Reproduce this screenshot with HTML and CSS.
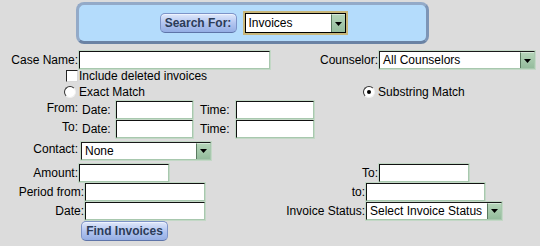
FILE: index.html
```html
<!DOCTYPE html>
<html lang="en">
<head>
<meta charset="UTF-8" />
<title>Invoice Search</title>
<link rel="stylesheet" href="styles.css">
</head>
<body>

<div class="searchbar">
  <button class="btn btn-search">Search For:</button>
  <div class="select sel-type focused">
    <span class="sel-text">Invoices</span>
    <span class="arrow"><svg width="7" height="4" viewBox="0 0 7 4"><path d="M0 0h7L3.5 4z" fill="#000"/></svg></span>
  </div>
</div>

<form class="form">
  <div class="row r1">
    <label class="lbl w78">Case Name:</label>
    <input type="text" class="field w191">
    <label class="lbl w108">Counselor:</label>
    <div class="select w156">
      <span class="sel-text">All Counselors</span>
      <span class="arrow"><svg width="7" height="4" viewBox="0 0 7 4"><path d="M0 0h7L3.5 4z" fill="#000"/></svg></span>
    </div>
  </div>

  <div class="row r2">
    <input type="checkbox" class="check">
    <span class="opt">Include deleted invoices</span>
  </div>

  <div class="row r3">
    <input type="radio" name="match" class="radio radio-exact">
    <span class="opt">Exact Match</span>
    <input type="radio" name="match" class="radio radio-sub" checked>
    <span class="opt">Substring Match</span>
  </div>

  <div class="row r4">
    <label class="lbl w78 raised">From:</label>
    <span class="sub sub-date">Date:</span>
    <input type="text" class="field w77">
    <span class="sub sub-time">Time:</span>
    <input type="text" class="field w78">
  </div>

  <div class="row r5">
    <label class="lbl w78 raised">To:</label>
    <span class="sub sub-date">Date:</span>
    <input type="text" class="field w77">
    <span class="sub sub-time">Time:</span>
    <input type="text" class="field w78">
  </div>

  <div class="row r6">
    <label class="lbl w78 raised">Contact:</label>
    <div class="select w130 gap2">
      <span class="sel-text">None</span>
      <span class="arrow"><svg width="7" height="4" viewBox="0 0 7 4"><path d="M0 0h7L3.5 4z" fill="#000"/></svg></span>
    </div>
  </div>

  <div class="row r7">
    <label class="lbl w78">Amount:</label>
    <input type="text" class="field w90">
    <label class="lbl w209">To:</label>
    <input type="text" class="field w90">
  </div>

  <div class="row r8">
    <label class="lbl w84">Period from:</label>
    <input type="text" class="field w120">
    <label class="lbl w160">to:</label>
    <input type="text" class="field w119">
  </div>

  <div class="row r9">
    <label class="lbl w84">Date:</label>
    <input type="text" class="field w120">
    <label class="lbl w160">Invoice Status:</label>
    <div class="select w136">
      <span class="sel-text">Select Invoice Status</span>
      <span class="arrow"><svg width="7" height="4" viewBox="0 0 7 4"><path d="M0 0h7L3.5 4z" fill="#000"/></svg></span>
    </div>
  </div>

  <div class="row r10">
    <button type="button" class="btn btn-find">Find Invoices</button>
  </div>
</form>

</body>
</html>
```

FILE: styles.css
```css
html, body {
  margin: 0;
  padding: 0;
  background: #dcdcdc;
  font-family: "Liberation Sans", Arial, sans-serif;
  font-size: 12px;
  color: #000;
}

.searchbar {
  box-sizing: border-box;
  margin: 2px 0 0 76px;
  width: 353px;
  height: 42px;
  background: #b4dcfc;
  border: 3px solid #93aac8;
  border-bottom-color: #6a82a4;
  border-right-color: #7d95b6;
  border-radius: 8px;
  display: flex;
  align-items: center;
  justify-content: center;
  gap: 8px;
}

.btn {
  box-sizing: border-box;
  height: 20px;
  padding: 0;
  white-space: nowrap;
  font-family: "Liberation Sans", Arial, sans-serif;
  font-size: 12px;
  font-weight: bold;
  color: #2c3c58;
  background: linear-gradient(#dfe8fb, #b3c5f0 50%, #94aee4);
  border: 1px solid #7d93c8;
  border-bottom-color: #5e74a8;
  border-radius: 5px;
  box-shadow: inset 0 1px 0 #eef3fe;
}

.btn-search { width: 77px; }
.btn-find { width: 87px; margin-left: 81px; }

.select {
  box-sizing: border-box;
  height: 18px;
  display: flex;
  align-items: stretch;
  background: #fff;
  border: 1px solid #a8c8ae;
  border-top-color: #1a1a1a;
  border-left-color: #1a1a1a;
  box-shadow: 0 0 0 1px #c3d8c6;
}

.sel-text {
  flex: 1;
  padding-left: 3px;
  line-height: 16px;
  white-space: nowrap;
  overflow: hidden;
}

.arrow {
  width: 14px;
  flex: none;
  display: flex;
  align-items: center;
  justify-content: center;
  background: linear-gradient(#b4d4b8, #94bc9c);
  border-left: 1px solid #5a7a60;
  border-top: 1px solid #d6e8d8;
  box-sizing: border-box;
}

.sel-type {
  width: 101px;
  height: 20px;
  border: 1px solid #000;
  box-shadow: 0 0 0 2px #c8b679;
}
.sel-type .sel-text { line-height: 18px; }

.row {
  display: flex;
  align-items: center;
  white-space: nowrap;
}

.r1 { margin-top: 7px; height: 18px; }
.r2 { height: 14px; padding-left: 66px; }
.r3 { height: 17px; padding-left: 64px; }
.r4 { height: 19px; }
.r5 { height: 19px; }
.r6 { height: 19px; margin-top: 3px; }
.r7 { height: 19px; margin-top: 3px; }
.r8 { height: 19px; }
.r9 { height: 19px; }
.r10 { height: 22px; }

.lbl {
  display: block;
  text-align: right;
  flex: none;
}
.raised { align-self: flex-start; padding-top: 1px; }

.w78 { width: 78px; }
.w84 { width: 84px; }
.w108 { width: 108px; }
.w160 { width: 160px; }
.w209 { width: 209px; }

.field {
  box-sizing: border-box;
  height: 18px;
  margin: 0 0 0 1px;
  padding: 0 2px;
  font: inherit;
  background: #fff;
  border: 1px solid #a8c8ae;
  border-top-color: #111;
  border-left-color: #111;
  box-shadow: 0 0 0 1px #c3d8c6;
  flex: none;
}

.select.w156, .select.w136 { margin-left: 1px; }
.gap2 { margin-left: 3px; }

.w77 { width: 77px; }
.w90 { width: 90px; }
.w119 { width: 119px; }
.w120 { width: 120px; }
.w130 { width: 130px; }
.w136 { width: 136px; }
.w156 { width: 156px; }
.w191 { width: 191px; }

.sub-date { width: 37px; padding-left: 4px; box-sizing: border-box; }
.sub-time { width: 42px; padding-left: 7px; box-sizing: border-box; }

.check {
  appearance: none;
  -webkit-appearance: none;
  box-sizing: border-box;
  width: 12px;
  height: 12px;
  margin: 0 1px 0 0;
  background: #fff;
  border: 1px solid #d8d8d8;
  border-top-color: #222;
  border-left-color: #222;
}

.radio {
  appearance: none;
  -webkit-appearance: none;
  box-sizing: border-box;
  width: 12px;
  height: 12px;
  margin: 0 3px 0 0;
  border-radius: 50%;
  background: #fff;
  border: 1px solid #f0f0f0;
  border-top-color: #333;
  border-left-color: #333;
  position: relative;
}
.radio:checked::after {
  content: "";
  position: absolute;
  left: 3px;
  top: 3px;
  width: 4px;
  height: 4px;
  border-radius: 50%;
  background: #000;
}
.radio-sub { margin-left: 218px; }

.opt { line-height: 14px; }
```
